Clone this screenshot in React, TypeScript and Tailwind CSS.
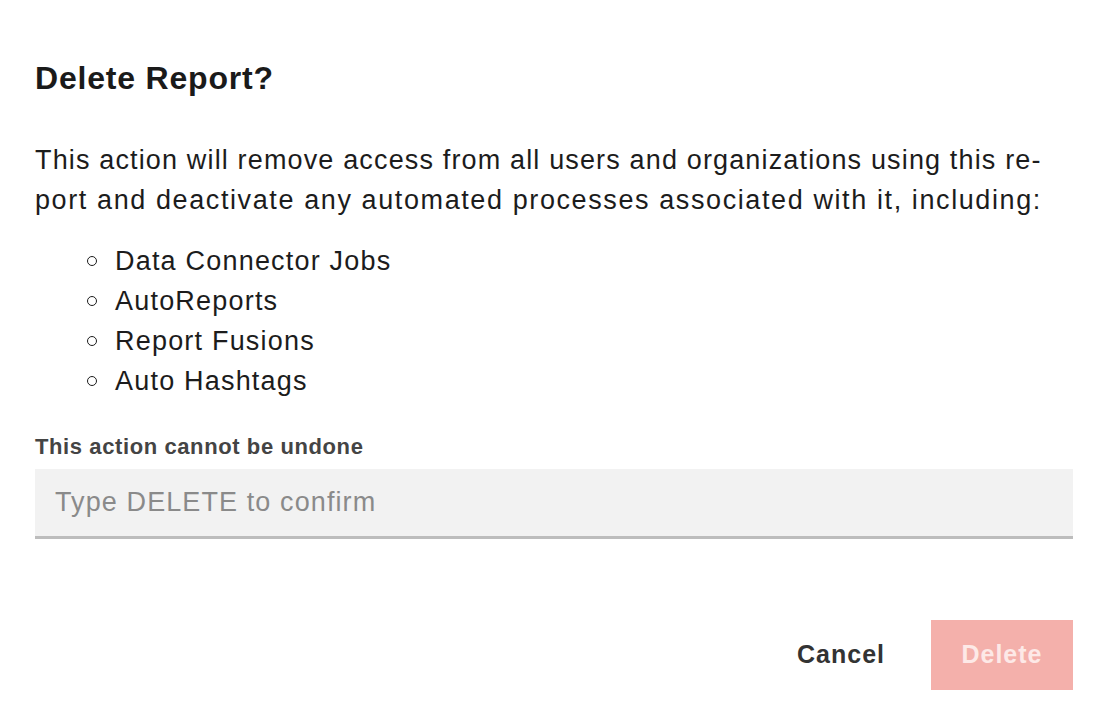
import { useState } from 'react'

const ITEMS = ['Data Connector Jobs', 'AutoReports', 'Report Fusions', 'Auto Hashtags']

export default function App() {
  const [value, setValue] = useState('')
  const canDelete = value === 'DELETE'

  return (
    <div className="w-[1106px] h-[718px] bg-white font-['Liberation_Sans',Arial,sans-serif] text-[#1c1c1c]">
      <div className="pl-[35px] pr-[33px] pt-[58px]">
        {/* Title */}
        <h1 className="text-[32px] leading-[40px] font-bold tracking-[0.8px] text-[#1a1a1a]">Delete Report?</h1>

        {/* Body */}
        <p className="mt-[42px] text-[27px] leading-[40px] tracking-[1.15px] text-[#1c1c1c] whitespace-nowrap">
          This action will remove access from all users and organizations using this re-
          <br />
          <span className="tracking-[1.6px]">port and deactivate any automated processes associated with it, including:</span>
        </p>

        <ul className="mt-[21px] pl-[52px]">
          {ITEMS.map(item => (
            <li key={item} className="flex items-center h-[40px] text-[27px] tracking-[1.2px]">
              <span className="w-[10px] h-[10px] rounded-full border-[1.5px] border-[#1c1c1c] mr-[18px] shrink-0" />
              {item}
            </li>
          ))}
        </ul>

        {/* Confirm */}
        <p className="mt-[34px] text-[22px] leading-[24px] font-bold tracking-[0.6px] text-[#444444]">This action cannot be undone</p>
        <input
          value={value}
          onChange={e => setValue(e.target.value)}
          placeholder="Type DELETE to confirm"
          className="mt-[10px] w-full h-[70px] bg-[#f2f2f2] border-b-[3px] border-[#bdbdbd] px-[20px] text-[27px] tracking-[1.1px] text-[#1c1c1c] placeholder:text-[#8a8a8a] outline-none"
        />

        {/* Actions */}
        <div className="mt-[81px] flex justify-end items-center gap-[46px]">
          <button className="text-[25px] font-bold tracking-[1px] text-[#333333]">Cancel</button>
          <button
            disabled={!canDelete}
            className="w-[142px] h-[70px] bg-[#f4b0ab] text-[25px] font-bold tracking-[1px] text-[#fde9e7]"
          >
            Delete
          </button>
        </div>
      </div>
    </div>
  )
}
